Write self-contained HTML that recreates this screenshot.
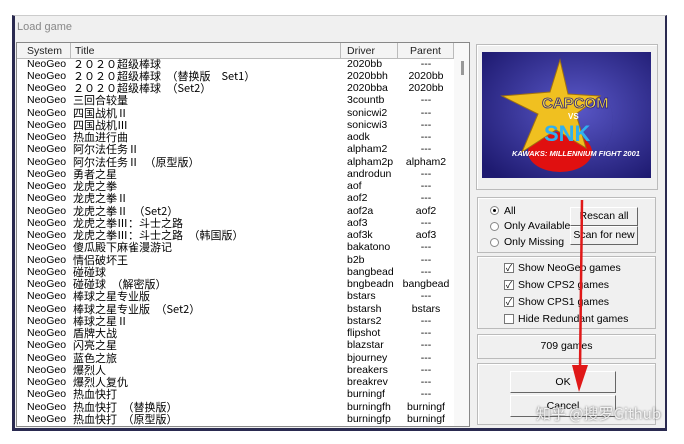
<!DOCTYPE html>
<html><head><meta charset="utf-8"><style>
body{margin:0;width:684px;height:444px;background:#fff;position:relative;overflow:hidden;font-family:Tahoma,"Liberation Sans","Noto Sans CJK SC",sans-serif;font-size:10.5px;color:#000}
.a{position:absolute}
#win{left:12px;top:15px;width:655px;height:416px;background:#f0f0f0;border-left:3px solid #2a2a50;border-right:2px solid #2a2a50;border-bottom:3px solid #2a2a50;box-sizing:border-box;border-top:1px solid #ccc}
#list{left:16px;top:42px;width:454px;height:385px;background:#fff;border:1px solid #888;box-sizing:border-box;overflow:hidden}
.hd{position:absolute;top:0;height:16px;line-height:16px;background:#f4f4f4;border-right:1px solid #bbb;border-bottom:1px solid #bbb;box-sizing:border-box;color:#222}
.rows{position:absolute;top:14.5px;left:0;width:440px}
.r{height:12.25px;line-height:12.25px;position:relative;white-space:nowrap}
.r span{position:absolute;top:0}
.s{left:10px}.t{left:56px;font-family:"Noto Sans CJK SC","WenQuanYi Zen Hei",sans-serif;font-size:11px}.d{left:330px}.p{left:382px;width:54px;text-align:center}
.box{position:absolute;border:1px solid #bbb;box-shadow:1px 1px 0 #fff inset;box-sizing:border-box}
.btn{position:absolute;background:#f0f0f0;border:1px solid #fff;border-right:1px solid #666;border-bottom:1px solid #666;box-sizing:border-box;text-align:center;font-size:10.5px;white-space:nowrap}
.cb{position:absolute;width:10px;height:10px;border:1px solid #777;background:#fff;box-sizing:border-box;font-size:9px;line-height:8px;text-align:center}
.rd{position:absolute;width:9px;height:9px;border:1px solid #888;border-radius:50%;background:#fff;box-sizing:border-box}
</style></head><body>
<div class="a" style="left:0;top:0;width:684px;height:15px;background:#fff"></div>
<div id="win" class="a"></div>
<div class="a" style="left:17px;top:21px;color:#888;font-size:11px">Load game</div>
<div id="list" class="a">
<div class="hd" style="left:0;width:54px;padding-left:10px">System</div>
<div class="hd" style="left:54px;width:270px;padding-left:4px">Title</div>
<div class="hd" style="left:324px;width:57px;padding-left:6px">Driver</div>
<div class="hd" style="left:381px;width:56px;text-align:center">Parent</div>
<div class="a" style="left:437px;top:0;width:16px;height:385px;background:#f8f8f8"></div>
<div class="a" style="left:444px;top:18px;width:3px;height:14px;background:#999"></div>
<div class="rows">
<div class="r"><span class="s">NeoGeo</span><span class="t">２０２０超级棒球</span><span class="d">2020bb</span><span class="p">---</span></div>
<div class="r"><span class="s">NeoGeo</span><span class="t">２０２０超级棒球　（替换版　Set1）</span><span class="d">2020bbh</span><span class="p">2020bb</span></div>
<div class="r"><span class="s">NeoGeo</span><span class="t">２０２０超级棒球　（Set2）</span><span class="d">2020bba</span><span class="p">2020bb</span></div>
<div class="r"><span class="s">NeoGeo</span><span class="t">三回合较量</span><span class="d">3countb</span><span class="p">---</span></div>
<div class="r"><span class="s">NeoGeo</span><span class="t">四国战机Ⅱ</span><span class="d">sonicwi2</span><span class="p">---</span></div>
<div class="r"><span class="s">NeoGeo</span><span class="t">四国战机Ⅲ</span><span class="d">sonicwi3</span><span class="p">---</span></div>
<div class="r"><span class="s">NeoGeo</span><span class="t">热血进行曲</span><span class="d">aodk</span><span class="p">---</span></div>
<div class="r"><span class="s">NeoGeo</span><span class="t">阿尔法任务Ⅱ</span><span class="d">alpham2</span><span class="p">---</span></div>
<div class="r"><span class="s">NeoGeo</span><span class="t">阿尔法任务Ⅱ　（原型版）</span><span class="d">alpham2p</span><span class="p">alpham2</span></div>
<div class="r"><span class="s">NeoGeo</span><span class="t">勇者之星</span><span class="d">androdun</span><span class="p">---</span></div>
<div class="r"><span class="s">NeoGeo</span><span class="t">龙虎之拳</span><span class="d">aof</span><span class="p">---</span></div>
<div class="r"><span class="s">NeoGeo</span><span class="t">龙虎之拳Ⅱ</span><span class="d">aof2</span><span class="p">---</span></div>
<div class="r"><span class="s">NeoGeo</span><span class="t">龙虎之拳Ⅱ　（Set2）</span><span class="d">aof2a</span><span class="p">aof2</span></div>
<div class="r"><span class="s">NeoGeo</span><span class="t">龙虎之拳Ⅲ：斗士之路</span><span class="d">aof3</span><span class="p">---</span></div>
<div class="r"><span class="s">NeoGeo</span><span class="t">龙虎之拳Ⅲ：斗士之路　（韩国版）</span><span class="d">aof3k</span><span class="p">aof3</span></div>
<div class="r"><span class="s">NeoGeo</span><span class="t">傻瓜殿下麻雀漫游记</span><span class="d">bakatono</span><span class="p">---</span></div>
<div class="r"><span class="s">NeoGeo</span><span class="t">情侣破坏王</span><span class="d">b2b</span><span class="p">---</span></div>
<div class="r"><span class="s">NeoGeo</span><span class="t">碰碰球</span><span class="d">bangbead</span><span class="p">---</span></div>
<div class="r"><span class="s">NeoGeo</span><span class="t">碰碰球　（解密版）</span><span class="d">bngbeadn</span><span class="p">bangbead</span></div>
<div class="r"><span class="s">NeoGeo</span><span class="t">棒球之星专业版</span><span class="d">bstars</span><span class="p">---</span></div>
<div class="r"><span class="s">NeoGeo</span><span class="t">棒球之星专业版　（Set2）</span><span class="d">bstarsh</span><span class="p">bstars</span></div>
<div class="r"><span class="s">NeoGeo</span><span class="t">棒球之星Ⅱ</span><span class="d">bstars2</span><span class="p">---</span></div>
<div class="r"><span class="s">NeoGeo</span><span class="t">盾牌大战</span><span class="d">flipshot</span><span class="p">---</span></div>
<div class="r"><span class="s">NeoGeo</span><span class="t">闪亮之星</span><span class="d">blazstar</span><span class="p">---</span></div>
<div class="r"><span class="s">NeoGeo</span><span class="t">蓝色之旅</span><span class="d">bjourney</span><span class="p">---</span></div>
<div class="r"><span class="s">NeoGeo</span><span class="t">爆烈人</span><span class="d">breakers</span><span class="p">---</span></div>
<div class="r"><span class="s">NeoGeo</span><span class="t">爆烈人复仇</span><span class="d">breakrev</span><span class="p">---</span></div>
<div class="r"><span class="s">NeoGeo</span><span class="t">热血快打</span><span class="d">burningf</span><span class="p">---</span></div>
<div class="r"><span class="s">NeoGeo</span><span class="t">热血快打　（替换版）</span><span class="d">burningfh</span><span class="p">burningf</span></div>
<div class="r"><span class="s">NeoGeo</span><span class="t">热血快打　（原型版）</span><span class="d">burningfp</span><span class="p">burningf</span></div>
</div></div>
<!-- right panel -->
<div class="box" style="left:476px;top:44px;width:182px;height:146px"></div>
<svg class="a" style="left:482px;top:52px" width="169" height="126" viewBox="0 0 169 126">
<defs><radialGradient id="g" cx="55%" cy="45%" r="70%"><stop offset="0" stop-color="#5a58c8"/><stop offset="1" stop-color="#1e1a70"/></radialGradient></defs>
<rect width="169" height="126" fill="url(#g)"/>
<path d="M110 30 A38 38 0 1 1 55 110 A42 42 0 0 0 110 30Z" fill="#111"/>
<ellipse cx="78" cy="100" rx="32" ry="20" fill="#e01010"/>
<polygon points="78,8 68,40 20,44 56,62 40,100 74,78 104,96 94,62 118,44 86,42" fill="#f0c020" stroke="#a07010"/>
<text x="60" y="56" font-family="Liberation Sans" font-weight="bold" font-size="15" fill="#f4e040" stroke="#302080" stroke-width="0.8">CAPCOM</text>
<text x="86" y="67" font-family="Liberation Sans" font-weight="bold" font-size="8" fill="#fff">VS</text>
<text x="62" y="89" font-family="Liberation Sans" font-weight="bold" font-size="22" fill="#30b0f0">SNK</text>
<text x="30" y="104" font-family="Liberation Sans" font-style="italic" font-weight="bold" font-size="7.5" fill="#fff">KAWAKS: MILLENNIUM FIGHT 2001</text>
</svg>
<div class="box" style="left:477px;top:197px;width:179px;height:56px"></div>
<div class="rd" style="left:490px;top:206px"><div style="width:3px;height:3px;background:#000;border-radius:50%;margin:2px"></div></div>
<div class="a" style="left:504px;top:205px">All</div>
<div class="rd" style="left:490px;top:222px"></div>
<div class="a" style="left:504px;top:220px">Only Available</div>
<div class="rd" style="left:490px;top:238px"></div>
<div class="a" style="left:504px;top:236px">Only Missing</div>
<div class="btn" style="left:570px;top:207px;width:68px;height:19px;line-height:17px">Rescan all</div>
<div class="btn" style="left:570px;top:226px;width:68px;height:19px;line-height:17px">Scan for new</div>
<div class="box" style="left:477px;top:256px;width:179px;height:73px"></div>
<div class="cb" style="left:504px;top:263px">✓</div><div class="a" style="left:518px;top:262px">Show NeoGeo games</div>
<div class="cb" style="left:504px;top:280px">✓</div><div class="a" style="left:518px;top:279px">Show CPS2 games</div>
<div class="cb" style="left:504px;top:297px">✓</div><div class="a" style="left:518px;top:296px">Show CPS1 games</div>
<div class="cb" style="left:504px;top:314px"></div><div class="a" style="left:518px;top:313px">Hide Redundant games</div>
<div class="box" style="left:477px;top:334px;width:179px;height:25px"></div>
<div class="a" style="left:477px;top:340px;width:179px;text-align:center">709 games</div>
<div class="box" style="left:477px;top:363px;width:179px;height:62px"></div>
<div class="btn" style="left:510px;top:371px;width:106px;height:22px;line-height:20px">OK</div>
<div class="btn" style="left:510px;top:395px;width:106px;height:22px;line-height:20px">Cancel</div>
<svg class="a" style="left:570px;top:200px" width="30" height="200"><line x1="12" y1="0" x2="10" y2="170" stroke="#e01818" stroke-width="2.5"/><polygon points="2,165 18,165 9,192" fill="#e01818"/></svg>
<div class="a" style="left:536px;top:403px;font-size:15px;white-space:nowrap;color:rgba(255,255,255,0.85);font-family:'Noto Sans CJK SC',sans-serif;text-shadow:0 0 2px #555">知乎 @搜罗Github</div>
</body></html>
